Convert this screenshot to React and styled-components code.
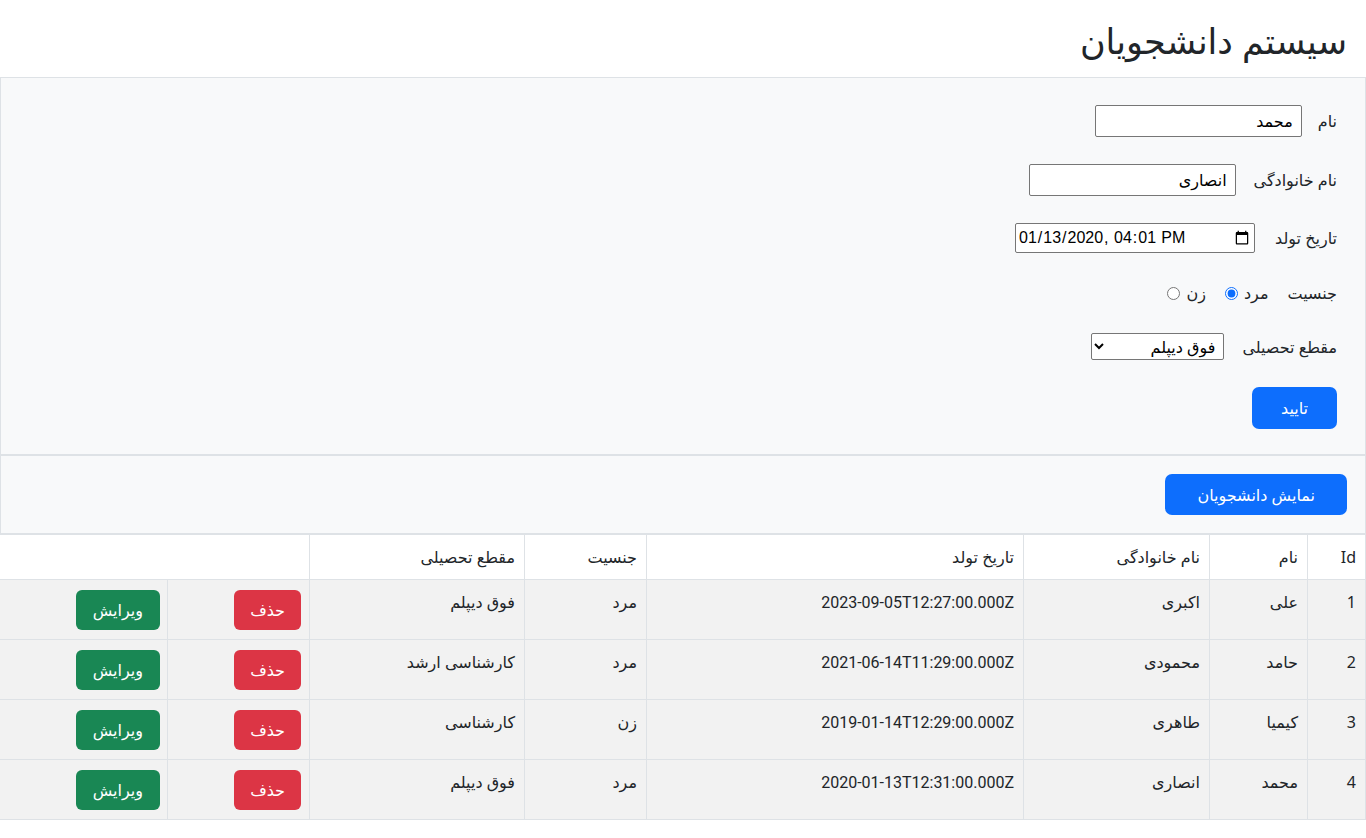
import styled, { createGlobalStyle } from "styled-components";

const GlobalStyle = createGlobalStyle`
  html, body {
    margin: 0;
    padding: 0;
    background: #fff;
  }
  body {
    font-family: "Noto Sans", "DejaVu Sans", sans-serif;
    font-size: 16px;
    line-height: 1.5;
    color: #212529;
  }
  * {
    box-sizing: border-box;
  }
`;

const Page = styled.div`
  direction: rtl;
  width: 1366px;
`;

const Title = styled.h1`
  margin: 0;
  padding: 17px 19px 12px;
  font-size: 35px;
  font-weight: 500;
  line-height: 48px;
`;

const Section = styled.div`
  background: #f8f9fa;
  border: 1px solid #dee2e6;
  padding: ${(props) => props.$pad || "18px"};
`;

const Form = styled.form`
  display: flex;
  flex-direction: column;
  align-items: flex-start;
  gap: 27px;
`;

const Row = styled.div`
  display: flex;
  align-items: center;
  height: ${(props) => props.$h || 32}px;
  gap: ${(props) => props.$gap || 16}px;
`;

const Label = styled.label`
  white-space: nowrap;
`;

const TextInput = styled.input`
  width: 207px;
  height: 32px;
  border: 1px solid #767676;
  border-radius: 2px;
  padding: 0 8px;
  font: inherit;
  color: #000;
  background: #fff;
  direction: rtl;
`;

const DateInput = styled.input`
  width: 240px;
  height: 30px;
  border: 1px solid #767676;
  border-radius: 2px;
  padding: 0 2px;
  font-family: "Liberation Sans", Arial, sans-serif;
  font-size: 16px;
  color: #000;
  background: #fff;
  direction: ltr;
`;

const Choice = styled.label`
  display: inline-flex;
  align-items: center;
  gap: 6px;
`;

const Radio = styled.input`
  margin: 0;
  width: 13px;
  height: 13px;
  accent-color: #0d6efd;
`;

const Select = styled.select`
  width: 133px;
  height: 27px;
  border: 1px solid #767676;
  border-radius: 2px;
  font: inherit;
  font-size: 16px;
  color: #000;
  background: #fff;
  padding: 0 4px;
`;

const Button = styled.button`
  border: none;
  border-radius: ${(props) => props.$radius || 6}px;
  background: ${(props) => props.$bg || "#0d6efd"};
  color: #fff;
  font: inherit;
  font-size: 16px;
  height: ${(props) => props.$h || 40}px;
  padding: 0 ${(props) => props.$px || 14}px;
  cursor: pointer;
  white-space: nowrap;
`;

const Table = styled.table`
  width: 1366px;
  border-collapse: collapse;
  table-layout: fixed;
  border: 1px solid #dee2e6;
`;

const Th = styled.th`
  text-align: right;
  font-weight: 400;
  padding: 10px 9px;
  height: 45px;
  border: 1px solid #dee2e6;
  background: #fff;
  vertical-align: middle;
`;

const Td = styled.td`
  padding: 10px ${(props) => props.$px || 9}px 9px;
  height: 59px;
  border: 1px solid #dee2e6;
  background: #f2f2f2;
  vertical-align: top;
`;

const DateText = styled.span`
  font-family: Roboto, "Liberation Sans", sans-serif;
`;

const students = [
  { id: 1, name: "علی", family: "اکبری", birth: "2023-09-05T12:27:00.000Z", gender: "مرد", degree: "فوق دیپلم" },
  { id: 2, name: "حامد", family: "محمودی", birth: "2021-06-14T11:29:00.000Z", gender: "مرد", degree: "کارشناسی ارشد" },
  { id: 3, name: "کیمیا", family: "طاهری", birth: "2019-01-14T12:29:00.000Z", gender: "زن", degree: "کارشناسی" },
  { id: 4, name: "محمد", family: "انصاری", birth: "2020-01-13T12:31:00.000Z", gender: "مرد", degree: "فوق دیپلم" },
];

const widths = [58, 98, 186, 377, 122, 215, 142, 168];

const App = () => {
  return (
    <Page>
      <GlobalStyle />
      <Title>سیستم دانشجویان</Title>
      <Section $pad="27px 28px 25px">
        <Form onSubmit={(e) => e.preventDefault()}>
          <Row>
            <Label>نام</Label>
            <TextInput defaultValue="محمد" />
          </Row>
          <Row $gap={18}>
            <Label>نام خانوادگی</Label>
            <TextInput defaultValue="انصاری" />
          </Row>
          <Row $h={30} $gap={20}>
            <Label>تاریخ تولد</Label>
            <DateInput type="datetime-local" defaultValue="2020-01-13T16:01" />
          </Row>
          <Row $h={26} $gap={19}>
            <Label>جنسیت</Label>
            <Choice>
              مرد
              <Radio type="radio" name="gender" defaultChecked />
            </Choice>
            <Choice>
              زن
              <Radio type="radio" name="gender" />
            </Choice>
          </Row>
          <Row $h={27} $gap={18}>
            <Label>مقطع تحصیلی</Label>
            <Select defaultValue="fd">
              <option value="d">دیپلم</option>
              <option value="fd">فوق دیپلم</option>
              <option value="k">کارشناسی</option>
              <option value="ka">کارشناسی ارشد</option>
            </Select>
          </Row>
          <Button type="submit" $h={42} $px={29} $radius={7}>
            تایید
          </Button>
        </Form>
      </Section>
      <Section $pad="18px 18px 18px">
        <Button $h={41} $px={32} $radius={7}>
          نمایش دانشجویان
        </Button>
      </Section>
      <Table>
        <colgroup>
          {widths.map((w, i) => (
            <col key={i} style={{ width: w }} />
          ))}
        </colgroup>
        <thead>
          <tr>
            <Th>Id</Th>
            <Th>نام</Th>
            <Th>نام خانوادگی</Th>
            <Th>تاریخ تولد</Th>
            <Th>جنسیت</Th>
            <Th>مقطع تحصیلی</Th>
            <Th colSpan={2}></Th>
          </tr>
        </thead>
        <tbody>
          {students.map((s) => (
            <tr key={s.id}>
              <Td>{s.id}</Td>
              <Td>{s.name}</Td>
              <Td>{s.family}</Td>
              <Td>
                <DateText>{s.birth}</DateText>
              </Td>
              <Td>{s.gender}</Td>
              <Td>{s.degree}</Td>
              <Td $px={8}>
                <Button $bg="#dc3545" $px={16}>
                  حذف
                </Button>
              </Td>
              <Td $px={7}>
                <Button $bg="#198754" $px={17}>
                  ویرایش
                </Button>
              </Td>
            </tr>
          ))}
        </tbody>
      </Table>
    </Page>
  );
};

export default App;
